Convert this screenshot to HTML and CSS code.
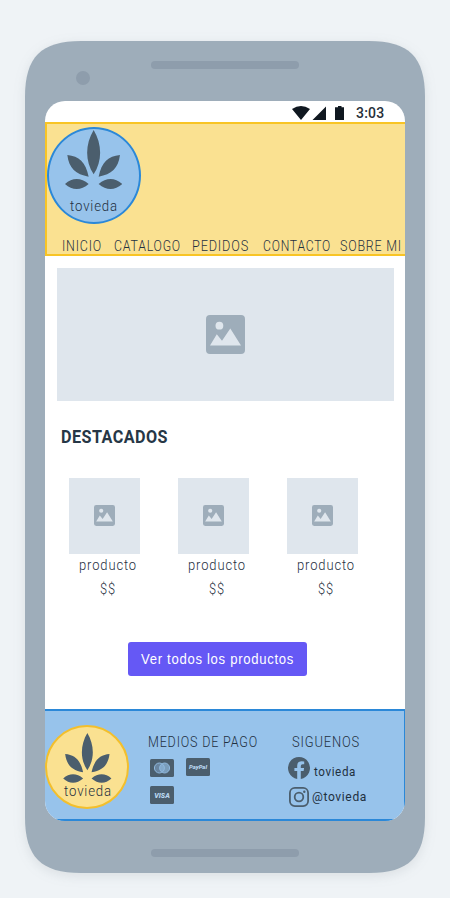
FILE: index.html
```html
<!DOCTYPE html>
<html lang="es">
<head>
<meta charset="utf-8">
<title>tovieda</title>
<link rel="stylesheet" href="styles.css">
</head>
<body>
<svg class="defs" aria-hidden="true">
  <symbol id="leaf" viewBox="0 0 172 178">
    <path d="M86 0C111 42 113 92 86 133C59 92 61 42 86 0ZM7 75C42 78 62 97 71 140C32 133 12 115 7 75ZM165 75C130 78 110 97 101 140C140 133 160 115 165 75ZM0 162C22 142 48 142 71 162C48 182 22 182 0 162ZM172 162C150 142 124 142 101 162C124 182 150 182 172 162Z"/>
  </symbol>
  <symbol id="image" viewBox="0 0 39 39">
    <path fill-rule="evenodd" d="M4 0H35Q39 0 39 4V35Q39 39 35 39H4Q0 39 0 35V4Q0 0 4 0ZM13.400 6.800A3.900 3.900 0 1 0 13.400 14.600A3.900 3.900 0 1 0 13.400 6.800ZM4 30.500H35L24.300 13.500L16 25.800L10.800 19.300Z"/>
  </symbol>
</svg>
<div class="phone">
  <svg class="shell" viewBox="0 0 400 832"><path d="M0 56C0 16 16 0 56 0H344C384 0 400 16 400 56V776C400 816 384 832 344 832H56C16 832 0 816 0 776Z"/></svg>
  <div class="camera"></div>
  <div class="speaker"></div>
  <div class="screen">
    <div class="status">
      <svg width="52" height="14" viewBox="0 0 52 14"><path d="M0 3Q9-3 18 3L9 14ZM20.500 14L34 .5V14ZM43 1.200H46V0H49.500V1.200H52V14H43Z"/></svg>
      <span class="time">3:03</span>
    </div>
    <header class="header">
      <div class="logo logo-blue">
        <svg class="leaf"><use href="#leaf"/></svg>
        <svg class="label" width="48" height="20"><text x="0" y="15" textLength="48" lengthAdjust="spacingAndGlyphs">tovieda</text></svg>
      </div>
      <nav class="nav">
        <a><svg class="label" width="40" height="20"><text x="0" y="15" textLength="40" lengthAdjust="spacingAndGlyphs">INICIO</text></svg></a>
        <a><svg class="label" width="67" height="20"><text x="0" y="15" textLength="67" lengthAdjust="spacingAndGlyphs">CATALOGO</text></svg></a>
        <a><svg class="label" width="57" height="20"><text x="0" y="15" textLength="57" lengthAdjust="spacingAndGlyphs">PEDIDOS</text></svg></a>
        <a><svg class="label" width="68" height="20"><text x="0" y="15" textLength="68" lengthAdjust="spacingAndGlyphs">CONTACTO</text></svg></a>
        <a><svg class="label" width="62" height="20"><text x="0" y="15" textLength="62" lengthAdjust="spacingAndGlyphs">SOBRE MI</text></svg></a>
      </nav>
    </header>
    <main class="main">
      <div class="hero"><svg width="39" height="39"><use href="#image"/></svg></div>
      <h1 class="title"><svg class="label" width="107" height="24"><text x="0" y="18" textLength="107" lengthAdjust="spacingAndGlyphs">DESTACADOS</text></svg></h1>
      <div class="products">
        <div class="product">
          <div class="thumb"><svg width="21" height="21"><use href="#image"/></svg></div>
          <svg class="label" width="58" height="24"><text x="0" y="16" textLength="58" lengthAdjust="spacingAndGlyphs">producto</text></svg>
          <svg class="label" width="16" height="24"><text x="0" y="16" textLength="16" lengthAdjust="spacingAndGlyphs">$$</text></svg>
        </div>
        <div class="product">
          <div class="thumb"><svg width="21" height="21"><use href="#image"/></svg></div>
          <svg class="label" width="58" height="24"><text x="0" y="16" textLength="58" lengthAdjust="spacingAndGlyphs">producto</text></svg>
          <svg class="label" width="16" height="24"><text x="0" y="16" textLength="16" lengthAdjust="spacingAndGlyphs">$$</text></svg>
        </div>
        <div class="product">
          <div class="thumb"><svg width="21" height="21"><use href="#image"/></svg></div>
          <svg class="label" width="58" height="24"><text x="0" y="16" textLength="58" lengthAdjust="spacingAndGlyphs">producto</text></svg>
          <svg class="label" width="16" height="24"><text x="0" y="16" textLength="16" lengthAdjust="spacingAndGlyphs">$$</text></svg>
        </div>
      </div>
      <button class="button"><svg class="label" width="153" height="24"><text x="0" y="17" textLength="153" lengthAdjust="spacingAndGlyphs">Ver todos los productos</text></svg></button>
    </main>
    <footer class="footer">
      <div class="logo logo-yellow">
        <svg class="leaf"><use href="#leaf"/></svg>
        <svg class="label" width="48" height="20"><text x="0" y="15" textLength="48" lengthAdjust="spacingAndGlyphs">tovieda</text></svg>
      </div>
      <section class="payments">
        <svg class="label" width="110" height="20"><text x="0" y="15" textLength="110" lengthAdjust="spacingAndGlyphs">MEDIOS DE PAGO</text></svg>
        <div class="cards">
          <svg class="card" viewBox="0 0 24 18"><rect width="24" height="18" rx="1.500"/><g class="rings"><circle cx="9.400" cy="9" r="5"/><circle class="right" cx="14.600" cy="9" r="5"/></g></svg>
          <svg class="card paypal" viewBox="0 0 24 18"><rect width="24" height="18" rx="1.500"/><text x="3" y="10.800" font-size="6" textLength="18" lengthAdjust="spacingAndGlyphs">PayPal</text></svg>
          <svg class="card" viewBox="0 0 24 18"><rect width="24" height="18" rx="1.500"/><text x="4.300" y="11.600" font-size="7" textLength="15.500" lengthAdjust="spacingAndGlyphs">VISA</text></svg>
        </div>
      </section>
      <section class="social">
        <svg class="label" width="68" height="20"><text x="0" y="15" textLength="68" lengthAdjust="spacingAndGlyphs">SIGUENOS</text></svg>
        <div class="network">
          <svg width="22" height="22" viewBox="0 0 22 22"><path class="solid" d="M9.200 21.900A11 11 0 1 1 12.800 21.900V14.100H15.600L16.100 11H12.800V9Q12.800 7.200 14.600 7.200H16.200V4.500Q14.900 4.200 13.700 4.200Q9.200 4.200 9.200 8.700V11H6.400V14.100H9.200Z"/></svg>
          <svg class="label small" width="42" height="20"><text x="0" y="13" textLength="42" lengthAdjust="spacingAndGlyphs">tovieda</text></svg>
        </div>
        <div class="network insta">
          <svg width="20" height="20" viewBox="0 0 20 20"><g class="outline"><rect x=".9" y=".9" width="18.200" height="18.200" rx="5"/><circle cx="10" cy="10" r="4.300"/></g><circle class="solid" cx="15.300" cy="4.700" r="1.200"/></svg>
          <svg class="label small" width="55" height="20"><text x="0" y="14" textLength="55" lengthAdjust="spacingAndGlyphs">@tovieda</text></svg>
        </div>
      </section>
    </footer>
  </div>
  <div class="speaker bottom"></div>
</div>
</body>
</html>
```
FILE: styles.css
```css
* { box-sizing: border-box; }

body {
  margin: 0;
  height: 898px;
  padding: 41px 25px 0;
  overflow: hidden;
  background: #eff3f6;
  font-family: Roboto, "Liberation Sans", sans-serif;
}

svg { display: block; flex: none; }
.defs { position: absolute; width: 0; height: 0; }

.phone {
  position: relative;
  width: 400px;
  height: 832px;
  padding-top: 20px;
}

.shell {
  position: absolute;
  inset: 0;
  z-index: -1;
  overflow: visible;
  fill: #9eadba;
  filter: drop-shadow(0 3px 6px rgba(80, 90, 100, .13));
}

.camera {
  position: absolute;
  left: 51px;
  top: 30px;
  width: 14px;
  height: 14px;
  border-radius: 50%;
  background: #8e9dac;
}

.speaker {
  width: 148px;
  height: 8px;
  margin: 0 auto;
  border-radius: 4px;
  background: #8e9dac;
}
.speaker.bottom { margin-top: 28px; }

.screen {
  display: flex;
  flex-direction: column;
  width: 360px;
  height: 720px;
  margin: 32px auto 0;
  overflow: hidden;
  border-radius: 20px;
  background: #fff;
}

.status {
  display: flex;
  justify-content: flex-end;
  gap: 12px;
  height: 21px;
  padding: 5px 21px 0 0;
  fill: #101820;
}
.time {
  width: 28px;
  font-size: 14px;
  line-height: 15px;
  font-weight: 500;
  letter-spacing: .2px;
  color: #273039;
}

.label {
  overflow: visible;
  font-size: 15.5px;
  font-weight: 300;
  letter-spacing: 1px;
  fill: #1f303f;
}

.header {
  height: 134px;
  padding: 3px 0 0;
  border: 2px solid #f8c425;
  border-right: 0;
  background: #fae191;
}

.logo {
  display: flex;
  flex-direction: column;
  align-items: center;
  flex: none;
}
.logo-blue {
  width: 94px;
  height: 97px;
  padding-top: 1px;
  border: 2px solid #2b88d8;
  border-radius: 50%;
  background: #97c3eb;
}
.logo-blue .leaf { width: 57.300px; height: 59.300px; margin-left: -1px; }
.logo-blue .label { margin: 7px 0 0; }
.leaf { fill: #4b5e6d; }

.nav {
  display: grid;
  grid-template-columns: 52px 78px 71px 77px 62px;
  margin: 12px 0 0 14.500px;
}

.hero {
  display: flex;
  align-items: center;
  justify-content: center;
  width: 337px;
  height: 133px;
  margin: 12px 0 0 12px;
  background: #dfe6ed;
  fill: #9eadba;
}
.hero svg { margin-top: -1px; }

.title { margin: 24px 0 0 16px; }
.title .label { font-size: 18px; font-weight: 700; letter-spacing: .5px; fill: #263746; }

.products {
  display: flex;
  gap: 38px;
  margin: 29px 0 0 24px;
}
.product {
  display: flex;
  flex-direction: column;
  align-items: center;
  width: 71px;
}
.product .label { font-size: 15px; margin-left: 7px; }
.thumb {
  display: flex;
  align-items: center;
  justify-content: center;
  width: 71px;
  height: 76px;
  padding-bottom: 1px;
  background: #dfe6ed;
  fill: #9eadba;
}

.button {
  display: block;
  width: 179px;
  height: 34px;
  margin: 40px 0 0 83px;
  padding: 5px 12.500px;
  border: 0;
  border-radius: 3px;
  background: #6558f5;
}
.button .label { font-size: 15px; fill: #fff; letter-spacing: .8px; }

.footer {
  display: flex;
  height: 112px;
  margin-top: auto;
  border: 2px solid #2b88d8;
  border-left: 0;
  border-right-width: 1px;
  background: #97c3eb;
}
.logo-yellow {
  width: 84px;
  height: 84px;
  margin-top: 14px;
  padding-top: 6px;
  border: 2px solid #f3bf2c;
  border-radius: 50%;
  background: #fae191;
}
.logo-yellow .leaf { width: 48.700px; height: 50px; margin-left: 1px; }
.logo-yellow .label { margin: -2px 0 0 2px; }

.payments { margin: 21px 0 0 19px; width: 111px; }
.cards {
  display: grid;
  grid-template-columns: 24px 24px;
  gap: 9px 12px;
  margin: 7px 0 0 2px;
}
.card { width: 24px; height: 18px; fill: #4b5e6d; }
.card text { fill: #b9d6ef; font-style: italic; font-weight: 900; }
.paypal { margin-top: -1px; }
.rings { fill: #6985a0; stroke: #8fb8dd; stroke-width: 1; }
.rings .right { fill: #8fb8dd; fill-opacity: .7; }

.social { margin: 21px 0 0 28px; }
.social > .label { margin-left: 5px; }
.network {
  display: flex;
  gap: 4px;
  margin: 5px 0 0 1px;
}
.network .label { margin-top: 6px; }
.insta { margin-top: 4px; gap: 3px; padding-left: 1px; }
.insta .label { margin-top: 0; }
.label.small { font-size: 13.500px; font-weight: 400; letter-spacing: .7px; }
.solid { fill: #4b5e6d; }
.outline { fill: none; stroke: #4b5e6d; stroke-width: 1.800; }
```
